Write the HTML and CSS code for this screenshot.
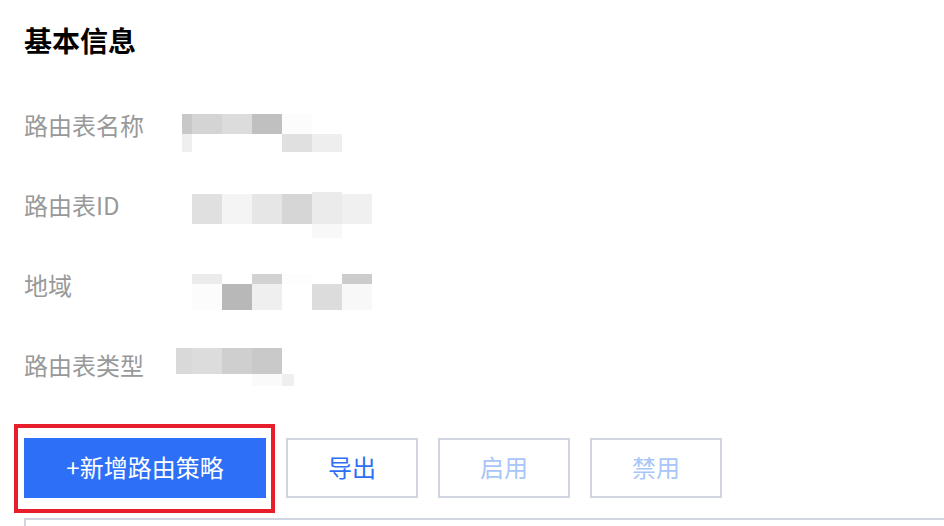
FILE: index.html
```html
<!DOCTYPE html>
<html lang="zh-CN">
<head>
<meta charset="utf-8">
<title>基本信息</title>
<link rel="stylesheet" href="styles.css">
</head>
<body>
<div class="page">
  <h2 class="title">基本信息</h2>
  <div class="info">
    <div class="row">
      <div class="label">路由表名称</div>
      <div class="mosaic m1">
        <span class="c8"></span><span class="d4"></span><span class="dc"></span><span class="c0"></span><span class="fc"></span><span></span>
        <span class="ef"></span><span></span><span></span><span></span><span class="e0"></span><span class="ee"></span>
      </div>
    </div>
    <div class="row">
      <div class="label">路由表ID</div>
      <div class="mosaic m2">
        <span></span><span></span><span></span><span></span><span class="eb"></span><span></span>
        <span class="e0"></span><span class="f4"></span><span class="e6"></span><span class="d6"></span><span class="eb"></span><span class="f0"></span>
        <span></span><span></span><span></span><span></span><span class="f8"></span><span></span>
      </div>
    </div>
    <div class="row">
      <div class="label">地域</div>
      <div class="mosaic m3">
        <span class="eb"></span><span></span><span class="d2"></span><span class="fd"></span><span></span><span class="cc"></span>
        <span class="fc"></span><span class="b8"></span><span class="ef"></span><span></span><span class="dc"></span><span class="f8"></span>
      </div>
    </div>
    <div class="row">
      <div class="label">路由表类型</div>
      <div class="mosaic m4">
        <span class="d9"></span><span class="dc"></span><span class="cf"></span><span class="c9"></span><span></span>
        <span></span><span></span><span></span><span class="fa"></span><span class="ef"></span>
      </div>
    </div>
  </div>
  <div class="toolbar">
    <div class="highlight-wrap">
      <button class="btn btn-primary">+新增路由策略</button>
      <div class="highlight"></div>
    </div>
    <button class="btn btn-outline">导出</button>
    <button class="btn btn-outline is-disabled">启用</button>
    <button class="btn btn-outline is-disabled">禁用</button>
  </div>
  <div class="table-box"></div>
</div>
</body>
</html>
```

FILE: styles.css
```css
* { box-sizing: border-box; }
html, body {
  margin: 0;
  padding: 0;
  background: #fff;
  overflow: hidden;
}
body {
  font-family: "Noto Sans CJK SC", "Noto Sans", sans-serif;
  color: #000;
}
.page {
  padding: 20px 0 0 24px;
  width: 944px;
  height: 526px;
  overflow: hidden;
}
.title {
  margin: 0;
  font-size: 28px;
  line-height: 40px;
  font-weight: 700;
  color: #000;
}
.info {
  margin-top: 27px;
  display: flex;
  flex-direction: column;
}
.row {
  display: flex;
  align-items: flex-start;
  height: 80px;
}
.label {
  width: 152px;
  font-size: 24px;
  line-height: 76px;
  color: #999;
  flex: none;
}
.mosaic {
  display: grid;
}
.mosaic span { display: block; }
.m1 {
  margin: 27px 0 0 6px;
  grid-template-columns: 10px 30px 30px 30px 30px 30px;
  grid-template-rows: 20px 18px;
}
.m2 {
  margin: 25px 0 0 16px;
  grid-template-columns: repeat(6, 30px);
  grid-template-rows: 2px 30px 14px;
}
.m3 {
  margin: 27px 0 0 16px;
  grid-template-columns: repeat(6, 30px);
  grid-template-rows: 10px 26px;
}
.m4 {
  margin: 21px 0 0 0;
  grid-template-columns: 16px 30px 30px 30px 12px;
  grid-template-rows: 26px 12px;
}
.b8 { background: #b8b8b8; }
.c0 { background: #c0c0c0; }
.c8 { background: #c8c8c8; }
.c9 { background: #c9c9c9; }
.cc { background: #cccccc; }
.cf { background: #cfcfcf; }
.d2 { background: #d2d2d2; }
.d4 { background: #d4d4d4; }
.d6 { background: #d6d6d6; }
.d9 { background: #d9d9d9; }
.dc { background: #dcdcdc; }
.e0 { background: #e0e0e0; }
.e6 { background: #e6e6e6; }
.eb { background: #ebebeb; }
.ee { background: #eeeeee; }
.ef { background: #efefef; }
.f0 { background: #f0f0f0; }
.f4 { background: #f4f4f4; }
.f8 { background: #f8f8f8; }
.fa { background: #fafafa; }
.fc { background: #fcfcfc; }
.fd { background: #fdfdfd; }

.toolbar {
  margin-top: 31px;
  display: flex;
  gap: 20px;
}
.highlight-wrap {
  position: relative;
}
.highlight {
  position: absolute;
  left: -10px;
  top: -14px;
  width: 261px;
  height: 89px;
  border: 4px solid #e61f2a;
  pointer-events: none;
}
.btn {
  height: 60px;
  margin: 0;
  padding: 0 0 2px;
  font-family: "Noto Sans CJK SC", "Noto Sans", sans-serif;
  font-size: 24px;
  line-height: 1;
  cursor: pointer;
  border-radius: 0;
}
.btn-primary {
  display: block;
  width: 242px;
  background: #2d6ff6;
  color: #fff;
  border: none;
}
.btn-outline {
  width: 132px;
  background: #fff;
  border: 2px solid #d1d5df;
  color: #2d6ff6;
}
.btn-outline.is-disabled {
  color: #a8c6f8;
  cursor: not-allowed;
}
.table-box {
  margin-top: 20px;
  height: 8px;
  border-top: 2px solid #d1d5df;
  border-left: 2px solid #d1d5df;
}
```
